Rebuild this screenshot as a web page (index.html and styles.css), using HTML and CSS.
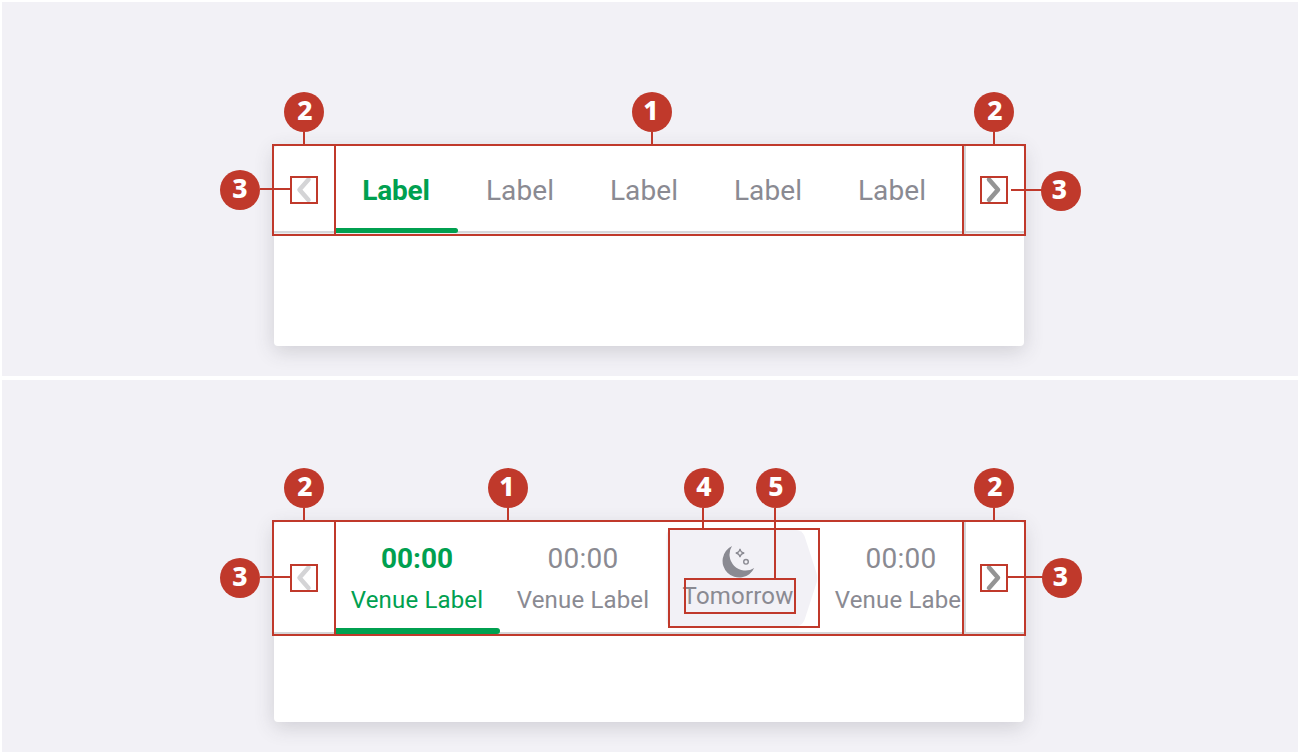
FILE: index.html
```html
<!DOCTYPE html>
<html lang="en">
<head>
<meta charset="utf-8">
<title>Tabs anatomy</title>
<link rel="stylesheet" href="styles.css">
</head>
<body>
<svg class="defs" aria-hidden="true">
  <symbol id="chevron-left" viewBox="0 0 28 28"><path d="M18.500 3.500 9.500 13.700l9 10.200" fill="none" stroke="currentColor" stroke-width="4.500" stroke-linecap="round" stroke-linejoin="round"/></symbol>
  <symbol id="chevron-right" viewBox="0 0 28 28"><path d="M9 3.500l9 10.200-9 10.200" fill="none" stroke="currentColor" stroke-width="4.500" stroke-linecap="round" stroke-linejoin="round"/></symbol>
</svg>
<main class="page">
  <section class="panel">
    <div class="card">
      <nav class="tabs tabs-simple">
        <span class="arrow arrow-off"><svg><use href="#chevron-left"/></svg></span>
        <div class="track">
          <a class="tab active">Label</a>
          <a class="tab">Label</a>
          <a class="tab">Label</a>
          <a class="tab">Label</a>
          <a class="tab">Label</a>
        </div>
        <span class="arrow next"><svg><use href="#chevron-right"/></svg></span>
      </nav>
      <div class="notes notes-simple">
        <i class="box region-prev"></i><i class="box region-track"></i><i class="box region-next"></i>
        <i class="box icon-prev"></i><i class="box icon-next"></i>
        <i class="line top-prev"></i><i class="line top-track"></i><i class="line top-next"></i>
        <i class="line side-prev"></i><i class="line side-next"></i>
        <b class="badge n-prev">2</b><b class="badge n-track">1</b><b class="badge n-next">2</b>
        <b class="badge n-left">3</b><b class="badge n-right">3</b>
      </div>
    </div>
  </section>
  <section class="panel">
    <div class="card">
      <nav class="tabs tabs-time">
        <span class="arrow arrow-off"><svg><use href="#chevron-left"/></svg></span>
        <div class="track">
          <a class="tab active"><span class="time">00:00</span><span class="venue">Venue Label</span></a>
          <a class="tab"><span class="time">00:00</span><span class="venue">Venue Label</span></a>
          <div class="day">
            <svg class="day-shape" viewBox="0 0 152 96"><path d="M6 0H130Q136 0 138.500 6L150.500 43Q152 48 150.500 53L138.500 90Q136 96 130 96H6Q.5 96 .5 90V6Q.5 0 6 0Z" fill="#f2f1f6"/></svg>
            <svg class="moon" viewBox="0 0 34 34">
              <path d="M11 1A16.600 16.600 0 1 0 33.200 23A16 16 0 0 1 11 1Z" fill="#8a8a92"/>
              <path d="M19 3.800Q19.600 7.400 23.200 8Q19.600 8.600 19 12.200Q18.400 8.600 14.800 8Q18.400 7.400 19 3.800Z" fill="none" stroke="#8a8a92" stroke-width="1.300"/>
              <circle cx="25" cy="16.800" r="2.300" fill="none" stroke="#8a8a92" stroke-width="1.400"/>
            </svg>
            <span class="day-name">Tomorrow</span>
          </div>
          <a class="tab"><span class="time">00:00</span><span class="venue">Venue Label</span></a>
        </div>
        <span class="arrow next"><svg><use href="#chevron-right"/></svg></span>
      </nav>
      <div class="notes notes-time">
        <i class="box region-prev"></i><i class="box region-track"></i><i class="box region-next"></i>
        <i class="box icon-prev"></i><i class="box icon-next"></i>
        <i class="box day-box"></i><i class="box name-box"></i>
        <i class="line top-prev"></i><i class="line top-track"></i><i class="line top-next"></i>
        <i class="line side-prev"></i><i class="line side-next"></i>
        <i class="line top-day"></i><i class="line top-name"></i>
        <b class="badge n-prev">2</b><b class="badge n-track">1</b><b class="badge n-next">2</b>
        <b class="badge n-left">3</b><b class="badge n-right">3</b>
        <b class="badge n-day">4</b><b class="badge n-name">5</b>
      </div>
    </div>
  </section>
</main>
</body>
</html>
```
FILE: styles.css
```css
* { box-sizing: border-box; }
body {
  margin: 0;
  background: #fff;
  font-family: Roboto, sans-serif;
  color: #8a8a92;
}
.defs { display: none; }
.page {
  width: 1300px;
  height: 754px;
  padding: 2px;
  display: grid;
  grid-template-rows: 374px 372px;
  gap: 4px;
  overflow: hidden;
}
.panel { background: #f2f1f6; padding: 144px 274px 0 272px; }
.panel + .panel { padding-top: 142px; }
.card {
  position: relative;
  width: 750px;
  height: 200px;
  background: #fff;
  border-radius: 4px;
  box-shadow: 0 5px 20px rgba(60, 58, 70, 0.19);
}

/* Tab bars */
.tabs { display: grid; grid-template-columns: 60px 630px 60px; }
.tabs-simple { height: 88px; box-shadow: inset 0 -1px #eceef0, inset 0 -3px #d6d7da; }
.tabs-time { height: 112px; box-shadow: inset 0 -2px #d5d5d7; }
.arrow { display: flex; align-items: center; justify-content: center; color: #949494; }
.arrow svg { width: 28px; height: 28px; }
.arrow-off { color: #d4d4d6; }
.next { border-left: 2px solid #d5d5d7; padding-right: 2px; }
.track { display: flex; overflow: hidden; }
.tab { flex: none; white-space: nowrap; text-align: center; }
.active { color: #00a050; }
.tabs-simple .tab {
  width: 124px;
  height: 87px;
  line-height: 90px;
  font-size: 28px;
  letter-spacing: 0.1px;
}
.tabs-simple .active {
  position: relative;
  font-weight: 700;
  letter-spacing: -0.15px;
}
.tabs-simple .active::after {
  content: "";
  position: absolute;
  left: 0;
  right: 0;
  bottom: 0;
  height: 5px;
  background: #00a050;
  border-radius: 0 2.5px 2.5px 0;
}
.tabs-time .arrow { height: 112px; }
.tabs-time .tab {
  width: 166px;
  height: 112px;
  padding-top: 17px;
  display: flex;
  flex-direction: column;
  align-items: center;
}
.time { font-size: 28px; line-height: 40px; letter-spacing: 0.3px; }
.venue { font-size: 24px; line-height: 42px; letter-spacing: 0.15px; }
.active .time { font-weight: 700; letter-spacing: 0; }
.tabs-time .active::after {
  content: "";
  width: 100%;
  height: 6px;
  margin-top: 7px;
  background: #00a050;
  border-radius: 0 3px 3px 0;
}
.day {
  position: relative;
  flex: none;
  width: 152px;
  height: 96px;
  margin-top: 8px;
  padding: 15px 8px 0 0;
  display: flex;
  flex-direction: column;
  align-items: center;
}
.day-shape { position: absolute; inset: 0; width: 152px; height: 96px; }
.moon { position: relative; width: 34px; height: 34px; }
.day-name { position: relative; font-size: 24px; line-height: 34px; letter-spacing: 0.2px; }

/* Callouts laid over the card */
.notes { --h: 92px; --icon-y: 30px; --line-y: 42px; }
.notes-time { --h: 116px; --icon-y: 42px; --line-y: 54px; }
.box { position: absolute; border: 2px solid #c0392b; }
.line { position: absolute; background: #c0392b; width: 2px; height: 12px; top: -14px; }
.badge {
  position: absolute;
  top: -54px;
  width: 40px;
  height: 40px;
  border-radius: 50%;
  background: #c0392b;
  color: #fff;
  font: 800 26.5px/37px "Noto Sans", sans-serif;
  text-align: center;
}
.region-prev { left: -2px; top: -2px; width: 64px; height: var(--h); }
.region-track { left: 60px; top: -2px; width: 630px; height: var(--h); }
.region-next { left: 688px; top: -2px; width: 64px; height: var(--h); }
.icon-prev { left: 16px; top: var(--icon-y); width: 28px; height: 28px; }
.icon-next { left: 706px; top: var(--icon-y); width: 28px; height: 28px; }
.top-prev { left: 29px; }
.top-next { left: 719px; }
.notes-simple .top-track { left: 377px; }
.notes-time .top-track { left: 233px; }
.side-prev { left: -14px; top: var(--line-y); width: 30px; height: 2px; }
.notes-simple .side-next { left: 737px; top: 43px; width: 31px; height: 2px; }
.notes-time .side-next { left: 734px; top: 54px; width: 35px; height: 2px; }
.n-prev { left: 10px; padding-left: 2px; }
.n-next { left: 700px; padding-left: 2px; }
.n-track { padding-right: 2px; }
.notes-simple .n-track { left: 358px; }
.notes-time .n-track { left: 214px; }
.notes-simple .n-left { left: -54px; top: 24px; }
.notes-simple .n-right { left: 767px; top: 25px; padding-right: 3px; }
.notes-time .n-left { left: -54px; top: 36px; }
.notes-time .n-right { left: 768px; top: 36px; padding-right: 3px; }
.day-box { left: 394px; top: 6px; width: 152px; height: 100px; }
.name-box { left: 410px; top: 56px; width: 112px; height: 36px; }
.top-day { left: 428px; height: 20px; }
.top-name { left: 500px; height: 70px; }
.n-day { left: 410px; }
.n-name { left: 482px; }
```
